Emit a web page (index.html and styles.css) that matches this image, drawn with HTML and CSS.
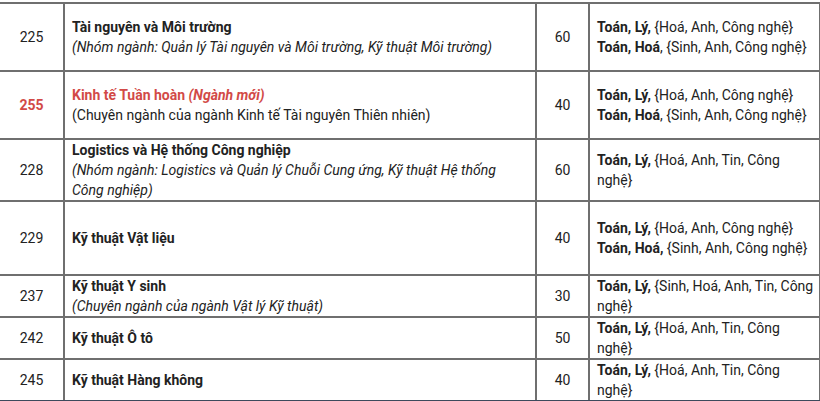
FILE: index.html
```html
<!DOCTYPE html>
<html lang="vi">
<head>
<meta charset="utf-8">
<link rel="stylesheet" href="styles.css">
</head>
<body>
<table class="tbl">
  <colgroup>
    <col class="c-code"><col class="c-name"><col class="c-quota"><col class="c-combo">
  </colgroup>
  <tr class="r1">
    <td class="code">225</td>
    <td class="name"><b>Tài nguyên và Môi trường</b><br><i>(Nhóm ngành: Quản lý Tài nguyên và Môi trường, Kỹ thuật Môi trường)</i></td>
    <td class="quota">60</td>
    <td class="combo"><b>Toán, Lý,</b> {Hoá, Anh, Công nghệ}<br><b>Toán, Hoá</b>, {Sinh, Anh, Công nghệ}</td>
  </tr>
  <tr class="r2">
    <td class="code red"><b>255</b></td>
    <td class="name"><b class="red">Kinh tế Tuần hoàn <i>(Ngành mới)</i></b><br>(Chuyên ngành của ngành Kinh tế Tài nguyên Thiên nhiên)</td>
    <td class="quota">40</td>
    <td class="combo"><b>Toán, Lý,</b> {Hoá, Anh, Công nghệ}<br><b>Toán, Hoá</b>, {Sinh, Anh, Công nghệ}</td>
  </tr>
  <tr class="r3">
    <td class="code">228</td>
    <td class="name"><b>Logistics và Hệ thống Công nghiệp</b><br><i>(Nhóm ngành: Logistics và Quản lý Chuỗi Cung ứng, Kỹ thuật Hệ thống Công nghiệp)</i></td>
    <td class="quota">60</td>
    <td class="combo"><b>Toán, Lý,</b> {Hoá, Anh, Tin, Công nghệ}</td>
  </tr>
  <tr class="r4">
    <td class="code">229</td>
    <td class="name"><b>Kỹ thuật Vật liệu</b></td>
    <td class="quota">40</td>
    <td class="combo"><b>Toán, Lý,</b> {Hoá, Anh, Công nghệ}<br><b>Toán, Hoá,</b> {Sinh, Anh, Công nghệ}</td>
  </tr>
  <tr class="r5">
    <td class="code">237</td>
    <td class="name"><b>Kỹ thuật Y sinh</b><br><i>(Chuyên ngành của ngành Vật lý Kỹ thuật)</i></td>
    <td class="quota">30</td>
    <td class="combo"><b>Toán, Lý,</b> {Sinh, Hoá, Anh, Tin, Công nghệ}</td>
  </tr>
  <tr class="r6">
    <td class="code">242</td>
    <td class="name"><b>Kỹ thuật Ô tô</b></td>
    <td class="quota">50</td>
    <td class="combo"><b>Toán, Lý,</b> {Hoá, Anh, Tin, Công nghệ}</td>
  </tr>
  <tr class="r7">
    <td class="code">245</td>
    <td class="name"><b>Kỹ thuật Hàng không</b></td>
    <td class="quota">40</td>
    <td class="combo"><b>Toán, Lý,</b> {Hoá, Anh, Tin, Công nghệ}</td>
  </tr>
</table>
</body>
</html>
```
FILE: styles.css
```css
html, body {
  margin: 0;
  padding: 0;
  background: #ffffff;
}
body {
  padding-top: 2px;
  font-family: Roboto, "Noto Sans", sans-serif;
  font-size: 14px;
  color: #222222;
}
.tbl {
  border-collapse: collapse;
  table-layout: fixed;
  width: 820px;
}
.c-code { width: 64px; }
.c-name { width: 472px; }
.c-quota { width: 53px; }
.c-combo { width: 231px; }
.tbl td {
  border: 2px solid #6f6f6f;
  line-height: 20px;
  vertical-align: middle;
  padding: 0 6px 0 7px;
}
.tbl td.code { border-left: none; text-align: center; padding: 0; }
.tbl td.quota { text-align: center; padding: 0; }
.tbl td.combo { padding: 0 4px 0 7px; }
.tbl tr:last-child td { border-bottom-color: #3d4a5c; }
.red { color: #d24a47; }
.r1 td { height: 66px; }
.r2 td { height: 66px; }
.r3 td { height: 60px; }
.r4 td { height: 72px; }
.r5 td { height: 40px; }
.r6 td { height: 39px; }
.r7 td { height: 40px; }
b { font-weight: 700; }
```
